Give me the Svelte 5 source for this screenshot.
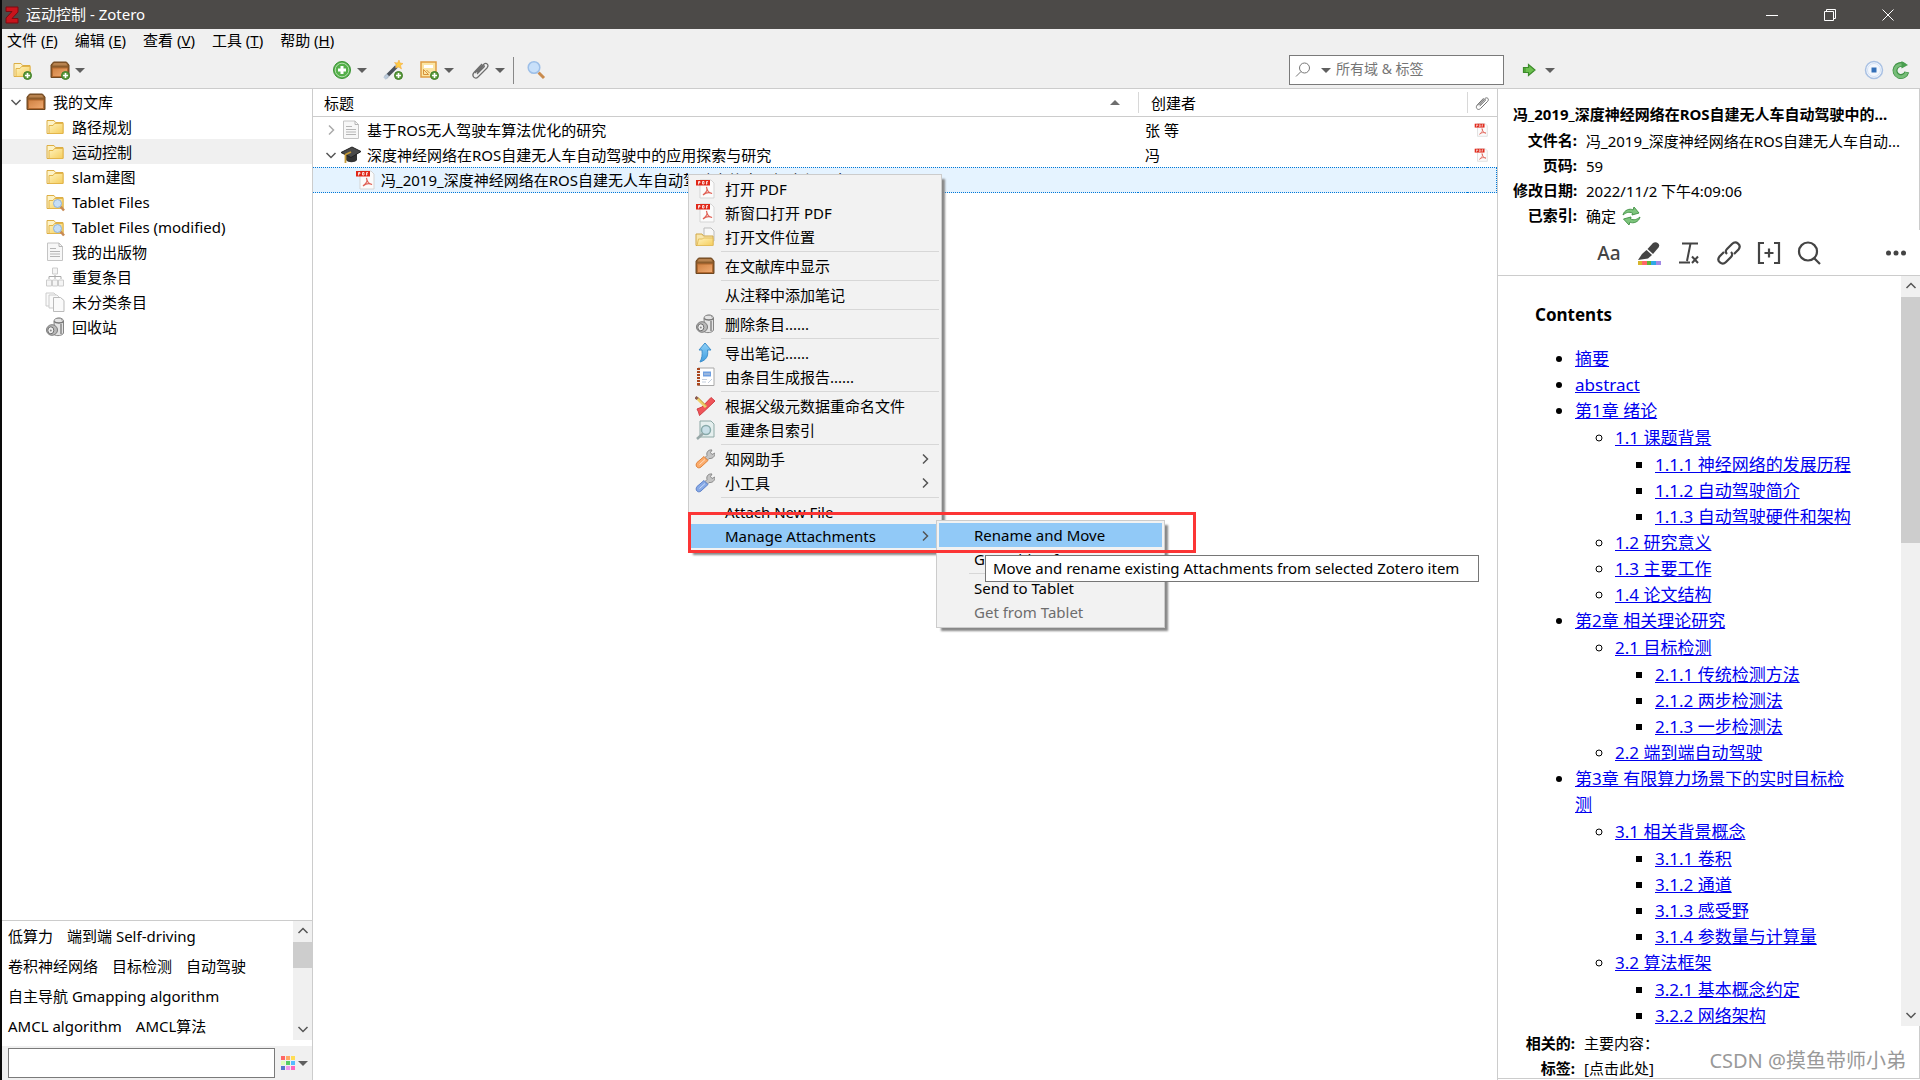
<script lang="ts">
  const menus = [["文件", "F"], ["编辑", "E"], ["查看", "V"], ["工具", "T"], ["帮助", "H"]];

  const collections = [
    {icon: "folder", name: "路径规划"},
    {icon: "folder", name: "运动控制", selected: true},
    {icon: "folder", name: "slam建图"},
    {icon: "savedSearch", name: "Tablet Files"},
    {icon: "savedSearch", name: "Tablet Files (modified)"},
    {icon: "page", name: "我的出版物"},
    {icon: "duplicates", name: "重复条目"},
    {icon: "unfiled", name: "未分类条目"},
    {icon: "trash", name: "回收站"},
  ];

  const tagLines = [["低算力", "端到端 Self-driving"], ["卷积神经网络", "目标检测", "自动驾驶"], ["自主导航 Gmapping algorithm"], ["AMCL algorithm", "AMCL算法"]];

  // each inner array is a group, groups are divided by a separator
  const contextMenu = [
    [{icon: "pdf", label: "打开 PDF"}, {icon: "pdf", label: "新窗口打开 PDF"}, {icon: "openFolder", label: "打开文件位置"}],
    [{icon: "library", label: "在文献库中显示"}],
    [{icon: "", label: "从注释中添加笔记"}],
    [{icon: "trash", label: "删除条目......"}],
    [{icon: "export", label: "导出笔记......"}, {icon: "report", label: "由条目生成报告......"}],
    [{icon: "rename", label: "根据父级元数据重命名文件"}, {icon: "reindex", label: "重建条目索引"}],
    [{icon: "wrenchOrange", label: "知网助手", sub: true}, {icon: "wrenchBlue", label: "小工具", sub: true}],
    [{icon: "", label: "Attach New File"}, {icon: "", label: "Manage Attachments", sub: true, active: true}],
  ];
  const subMenu = [
    [{icon: "", label: "Rename and Move", active: true}, {icon: "", label: "Get Table of Contents"}],
    [{icon: "", label: "Send to Tablet"}, {icon: "", label: "Get from Tablet", disabled: true}],
  ];

  const info = [["文件名:", "冯_2019_深度神经网络在ROS自建无人车自动..."], ["页码:", "59"], ["修改日期:", "2022/11/2 下午4:09:06"], ["已索引:", "确定"]];

  const contents = [
    {text: "摘要"},
    {text: "abstract"},
    {text: "第1章 绪论", items: [
      {text: "1.1 课题背景", items: [{text: "1.1.1 神经网络的发展历程"}, {text: "1.1.2 自动驾驶简介"}, {text: "1.1.3 自动驾驶硬件和架构"}]},
      {text: "1.2 研究意义"},
      {text: "1.3 主要工作"},
      {text: "1.4 论文结构"},
    ]},
    {text: "第2章 相关理论研究", items: [
      {text: "2.1 目标检测", items: [{text: "2.1.1 传统检测方法"}, {text: "2.1.2 两步检测法"}, {text: "2.1.3 一步检测法"}]},
      {text: "2.2 端到端自动驾驶"},
    ]},
    {text: "第3章 有限算力场景下的实时目标检测", items: [
      {text: "3.1 相关背景概念", items: [{text: "3.1.1 卷积"}, {text: "3.1.2 通道"}, {text: "3.1.3 感受野"}, {text: "3.1.4 参数量与计算量"}]},
      {text: "3.2 算法框架", items: [{text: "3.2.1 基本概念约定"}, {text: "3.2.2 网络架构"}]},
    ]},
  ];

  const swatches = ["#f66", "#fa6", "#fd5", "#dfb", "#5c6", "#5bf", "#57c", "#e9e", "#f6b"];
</script>

{#snippet plusBadge()}
  <circle cx="15.5" cy="15.5" r="4" fill="#5a9a3c" stroke="#3f7d28" />
  <path d="M15.5 13v5M13 15.5h5" stroke="#fff" stroke-width="1.6" />
{/snippet}

{#snippet folderShape()}
  <path d="M2 3.500h7l1.500 2H18v11H2z" fill="#fdf3c8" stroke="#dcae45" />
  <path d="M4 8.500h4l1.500-2H18v10H4z" fill="url(#gFolder)" stroke="#e3b54a" />
{/snippet}

{#snippet chestShape()}
  <path d="M3.500 2h13L19 5v12.500H1V5z" fill="#8c5c2c" stroke="#6f4720" />
  <path d="M4 3h12l1.500 2.500h-15z" fill="#b88350" />
  <path d="M2.500 8h15v8.500h-15z" fill="url(#gChest)" stroke="#b46a30" />
{/snippet}

{#snippet wrench(light: string, dark: string)}
  <path d="M10 8.500l2-2c-1-4 2-6 5-5.500L15.500 3.500l1.500 2L20 4c0 4-3 6-6 5.500l-2 2z" fill="#c4c4c4" stroke="#8a8a8a" />
  <path d="M2 13.500l7-6 4 4-7 6.500c-3 2.500-6.500-1-4-4.500z" fill={light} stroke={dark} />
  <path d="M4.500 15.500l5.500-5" stroke="#fff" stroke-opacity=".6" />
{/snippet}

{#snippet icon(name: string)}
  <svg class="icon" viewBox="0 0 20 20" fill="none" aria-hidden="true">
    {#if name === "folder"}
      {@render folderShape()}
    {:else if name === "folderAdd"}
      {@render folderShape()}{@render plusBadge()}
    {:else if name === "savedSearch"}
      {@render folderShape()}
      <path d="M15.500 14.500l3.500 4" stroke="#c78a55" stroke-width="2.500" />
      <circle cx="12.500" cy="11.500" r="4" fill="#c6def5" stroke="#8fb2d9" />
    {:else if name === "library"}
      {@render chestShape()}
    {:else if name === "libraryAdd"}
      {@render chestShape()}{@render plusBadge()}
    {:else if name === "page"}
      <path d="M2.500 1h11.500l3.500 3.500v14h-15z" fill="#f7f7f7" stroke="#c4c4c4" />
      <path d="M14 1v3.500h3.500M5 6.500h6M5 9.500h10M5 12h10M5 14.500h10" stroke="#b5b5b5" />
    {:else if name === "duplicates"}
      <path d="M7.500 1h5v6h-5zM1.500 13h5v6h-5zM7.500 13h5v6h-5zM13.500 13h5v6h-5z" fill="#f5f5f5" stroke="#ccc" />
      <path d="M10 8v4M4 12V9.500h12V12" stroke="#aaa" />
    {:else if name === "unfiled"}
      <path d="M1 1h8l2 2v11H1z" fill="#fafafa" stroke="#ccc" />
      <path d="M4 3h8l2 2v11H4z" fill="#fafafa" stroke="#ccc" />
      <path d="M8.500 5.500h7l3.500 3v11H8.500z" fill="#fafafa" stroke="#bbb" />
    {:else if name === "trash"}
      <path d="M9 4c0-4 9.500-4 9.500 0v12c-1 3-7 3-9 2z" fill="#e4e4e4" stroke="#858585" />
      <path d="M9 4.500c2 2 8 2 9.500 0M16 7v10" stroke="#777" stroke-width="1.300" />
      <path d="M12 1.500c3-1 5 0 5 2" stroke="#999" />
      <ellipse cx="7" cy="13" rx="5.500" ry="5.300" fill="#b8b8b8" stroke="#7c7c7c" />
      <ellipse cx="5.800" cy="13.300" rx="3" ry="3.500" fill="#efefef" stroke="#6d6d6d" />
      <circle cx="5.800" cy="13.500" r="1" fill="#888" />
    {:else if name === "pdf"}
      <path d="M5 1h11l3 3v15H5z" fill="#fbfbfb" stroke="#d5d5d5" />
      <path d="M1 1h14v5.500H1z" fill="#e02718" />
      <path d="M3.500 5.500V2.500h1.500v1.300h-1.500M7.500 2.500v2.500h1.500v-2.500zM11.500 5.500V2.500h1.500M11.500 4h1.200" stroke="#fff" stroke-width=".8" />
      <path d="M11.500 8c1 3 1 4-3.500 8 3-2.500 6-3 9-1.500-3-.5-5-3-5.500-6.500z" stroke="#e06055" stroke-width="1.200" />
    {:else if name === "hat"}
      <path d="M5 9v6c2 3 9 3 11 0V9z" fill="#333" />
      <path d="M0 7.500L11 2l9 4.500-10 6z" fill="#4a4a4a" stroke="#222" />
      <path d="M10 7L4.500 9.500V18" stroke="#c79a35" stroke-width="1.800" />
    {:else if name === "add"}
      <circle cx="10" cy="10" r="8.500" fill="#54b04a" stroke="#3b9434" />
      <circle cx="10" cy="10" r="6.800" stroke="#b5e0ae" />
      <path d="M10 6v8M6 10h8" stroke="#fff" stroke-width="3" />
    {:else if name === "wand"}
      <path d="M2.500 17.500L15 5" stroke="#4b525c" stroke-width="3.500" />
      <path d="M1.500 18.500L5 15M13 7l2.500-2.500" stroke="#bccbdb" stroke-width="3.500" />
      <path d="M16 0l1 3 3 .5-2.500 2L18.500 9l-3-2-3 1 1-3-2-2.500 3 .5z" fill="#fc4" stroke="#f2a53a" stroke-width=".5" />
      {@render plusBadge()}
    {:else if name === "note"}
      <path d="M2 2h15v15H2z" fill="#fbe6a5" stroke="#e09d42" stroke-width="1.500" />
      <path d="M5 5h9v3H5z" fill="#fff" />
      <path d="M4.500 9.500v5h5zM7.500 10l3 3" stroke="#d7913b" />
      {@render plusBadge()}
    {:else if name === "clip"}
      <path d="M5 13L13.500 4.500c3-2.500 6 .5 3.500 3.500L8 17c-3 3-7-1-4-4.500L12 4M7 14l7-7c1-1 0-2-1-1l-6 6.500" stroke="#6e6e6e" stroke-width="1.200" />
    {:else if name === "lookup"}
      <path d="M12.500 12.500l5.500 5.500" stroke="#c98b4e" stroke-width="3" />
      <circle cx="8" cy="7.500" r="5.800" fill="#c8e0fa" stroke="#9dbfe8" stroke-width="1.500" />
    {:else if name === "openFolder"}
      <path d="M9 1h7l3 3v10H9z" fill="#f8f8f8" stroke="#bbb" />
      <path d="M1 7h6l1.500 2H18v9.500H1z" fill="#f8e6ac" stroke="#d1a747" />
      <path d="M3.500 12h4l1-1H18v7.500H2z" fill="url(#gFolder)" stroke="#e3bd5c" />
    {:else if name === "export"}
      <path d="M10 0l6 7h-3.500c1 6-1 10-7.500 12 2-4 2.500-7 2-12H4z" fill="url(#gBlue)" stroke="#3e8fcb" />
    {:else if name === "report"}
      <path d="M3 1h16v17.500H3z" fill="#fff" stroke="#a8a8a8" />
      <path d="M2 1h3v17.500H2z" fill="#a9461d" />
      <path d="M1 3.500h4M1 6.500h4M1 9.500h4M1 12.500h4M1 15.500h4" stroke="#eee" />
      <path d="M8 4.500h8v5H8z" fill="#6f9fe0" />
      <path d="M9 7h6M7 12.500h5M7 15h4M13 16l4-4" stroke="#c5cfdd" />
    {:else if name === "rename"}
      <path d="M2 13l5-2 9-9.500L20 5l-10 9.500-5.500 5-1-3.500z" fill="#f0555a" stroke="#cf3d42" />
      <path d="M2 2l9 9" stroke="#efcf6a" stroke-width="3" />
      <path d="M3 1.500l8.500 8.500" stroke="#b38a3a" stroke-width=".8" />
      <path d="M.5 1l2 2" stroke="#8c5a50" stroke-width="3" />
    {:else if name === "reindex"}
      <path d="M5 1h11l3 3v13H5z" fill="#e5efee" stroke="#8ea9a6" />
      <circle cx="11" cy="10" r="4.500" fill="#c9e0e8" stroke="#8aa" stroke-width="1.500" />
      <path d="M8 13.500L2 19" stroke="#98a8a8" stroke-width="2.500" />
    {:else if name === "wrenchOrange"}
      {@render wrench("#fbac6c", "#e0823a")}
    {:else if name === "wrenchBlue"}
      {@render wrench("#86a9e6", "#5f82c9")}
    {:else if name === "locate"}
      <path d="M3.500 7.500h5v-3l6.500 5.500-6.500 5.500v-3h-5z" fill="#6cc04f" stroke="#3c8c2a" stroke-width="1.200" />
      <path d="M5 8v4.500" stroke="#3c8c2a" />
    {:else if name === "stop"}
      <circle cx="10" cy="10" r="8.500" fill="#f3f7fd" stroke="#a9c1e3" stroke-width="1.500" />
      <circle cx="10" cy="10" r="6.500" stroke="#d5e2f4" />
      <path d="M7.500 7.500h5v5h-5z" fill="#3470b8" />
    {:else if name === "sync"}
      <path d="M15.800 12a6 6 0 1 1-2.500-6.500" stroke="#3f9145" stroke-width="5" />
      <path d="M15.600 12.500a6 6 0 1 1-3-7" stroke="#77bd78" stroke-width="3" />
      <path d="M10.500 1v7.500l6.500-3.500z" fill="#4a9f50" />
    {:else if name === "refresh"}
      <path d="M2 9c1-5 7-7 10-5l1-3 5 6-7 2 .5-2C8 5.500 5 6.500 2 9z" fill="#7dc47c" stroke="#4b984e" />
      <path d="M19 11c-1 5-7 7-10 5l-1 3-5.500-6 7.500-2-.5 2c3.500 1.500 6.500.5 9.500-2z" fill="#7dc47c" stroke="#4b984e" />
    {/if}
  </svg>
{/snippet}

{#snippet chevron(dir: string)}
  <svg class="chevron {dir}" viewBox="0 0 12 12" fill="none" aria-hidden="true">
    <path d="M4 1.500L8.500 6 4 10.500" stroke="currentColor" stroke-width="1.500" />
  </svg>
{/snippet}

{#snippet toolButton(name: string, label: string, menu: boolean)}
  <button class="tool" aria-label={label}>
    {@render icon(name)}
    {#if menu}<span class="caret"></span>{/if}
  </button>
{/snippet}

{#snippet menuGroups(groups: any[])}
  {#each groups as group, i}
    {#if i > 0}<hr />{/if}
    {#each group as item}
      <button class="menuItem" class:active={item.active} disabled={item.disabled} role="menuitem">
        <span class="menuIcon">{#if item.icon}{@render icon(item.icon)}{/if}</span>
        <span class="menuLabel">{item.label}</span>
        {#if item.sub}{@render chevron("right")}{/if}
      </button>
    {/each}
  {/each}
{/snippet}

{#snippet toc(items: any[])}
  <ul>
    {#each items as item}
      <li><a href="#toc">{item.text}</a>{#if item.items}{@render toc(item.items)}{/if}</li>
    {/each}
  </ul>
{/snippet}

<svg class="defs" aria-hidden="true">
  <linearGradient id="gFolder" x2="1" y2="1"><stop stop-color="#fff3bd" /><stop offset="1" stop-color="#f5cd5c" /></linearGradient>
  <linearGradient id="gChest" x2="1" y2="1"><stop stop-color="#cf8142" /><stop offset="1" stop-color="#f0ab72" /></linearGradient>
  <linearGradient id="gBlue" x2="0" y2="1"><stop stop-color="#8ed0f7" /><stop offset="1" stop-color="#3f9de0" /></linearGradient>
</svg>

<div class="window">
  <header class="titleBar">
    <svg class="logo" viewBox="0 0 14 18" aria-hidden="true">
      <path d="M1 1h12v5L7 12.500h6V17H1v-5l6-6.500H1z" fill="#c8141c" stroke="#7c0b10" />
    </svg>
    <h1>运动控制 - Zotero</h1>
    <div class="windowButtons">
      <button aria-label="Minimize"><svg viewBox="0 0 12 12"><path d="M0 6.500h12" /></svg></button>
      <button aria-label="Restore"><svg viewBox="0 0 12 12"><path d="M.5 2.500h9v9h-9zM2.500 2.500V.5h9v9H9.500" /></svg></button>
      <button aria-label="Close"><svg viewBox="0 0 12 12"><path d="M.5.5l11 11M11.500.5l-11 11" /></svg></button>
    </div>
  </header>

  <nav class="menuBar">
    {#each menus as [name, key]}
      <button>{name} (<u>{key}</u>)</button>
    {/each}
  </nav>

  <div class="toolbar">
    <div class="collectionTools">
      {@render toolButton("folderAdd", "新建分类", false)}
      {@render toolButton("libraryAdd", "新建文库", true)}
    </div>
    <div class="itemTools">
      {@render toolButton("add", "新建条目", true)}
      {@render toolButton("wand", "通过标识符添加", false)}
      {@render toolButton("note", "新建笔记", true)}
      {@render toolButton("clip", "添加附件", true)}
      <span class="divider"></span>
      {@render toolButton("lookup", "高级搜索", false)}
    </div>
    <label class="search">
      <svg viewBox="0 0 16 16" fill="none"><circle cx="9.500" cy="6" r="5" stroke="#777" /><path d="M6 9.500L1 14.500" stroke="#777" /></svg>
      <span class="caret"></span>
      <input type="text" placeholder="所有域 & 标签" aria-label="所有域 & 标签" />
    </label>
    <div class="syncTools">
      {@render toolButton("locate", "定位", true)}
      <span class="spacer"></span>
      {@render toolButton("stop", "停止", false)}
      {@render toolButton("sync", "同步", false)}
    </div>
  </div>

  <main>
    <aside class="collections">
      <div class="tree">
        <button class="treeRow root">{@render chevron("down")}{@render icon("library")}<span>我的文库</span></button>
        {#each collections as row}
          <button class="treeRow" class:selected={row.selected}>{@render icon(row.icon)}<span>{row.name}</span></button>
        {/each}
      </div>
      <div class="tags">
        <div class="tagList">
          {#each tagLines as line}
            <div class="tagLine">
              {#each line as tag}<button>{tag}</button>{/each}
            </div>
          {/each}
        </div>
        <div class="scrollbar">{@render chevron("up")}<span class="thumb tagThumb"></span>{@render chevron("down")}</div>
      </div>
      <div class="tagFilter">
        <input type="text" aria-label="筛选标签" />
        <button class="tool" aria-label="标签颜色">
          <span class="swatches">{#each swatches as colour}<i style="background: {colour}"></i>{/each}</span>
          <span class="caret"></span>
        </button>
      </div>
    </aside>

    <section class="items">
      <table>
        <colgroup><col /><col class="creatorCol" /><col class="clipCol" /></colgroup>
        <thead>
          <tr>
            <th><span class="thTitle">标题<span class="sortMark"></span></span></th>
            <th><span class="thCell">创建者</span></th>
            <th><span class="thCell clip">{@render icon("clip")}</span></th>
          </tr>
        </thead>
        <tbody>
          <tr>
            <td><div class="itemTitle faint">{@render chevron("right")}{@render icon("page")}<span>基于ROS无人驾驶车算法优化的研究</span></div></td>
            <td class="creator">张 等</td>
            <td class="attachment">{@render icon("pdf")}</td>
          </tr>
          <tr>
            <td><div class="itemTitle">{@render chevron("down")}{@render icon("hat")}<span>深度神经网络在ROS自建无人车自动驾驶中的应用探索与研究</span></div></td>
            <td class="creator">冯</td>
            <td class="attachment">{@render icon("pdf")}</td>
          </tr>
          <tr class="selected">
            <td><div class="itemTitle child">{@render icon("pdf")}<span>冯_2019_深度神经网络在ROS自建无人车自动驾驶中的应用探索与研究.pdf</span></div></td>
            <td></td>
            <td></td>
          </tr>
        </tbody>
      </table>
    </section>

    <aside class="details">
      <div class="info">
        <h2>冯_2019_深度神经网络在ROS自建无人车自动驾驶中的...</h2>
        <dl>
          {#each info as [label, value], i}
            <dt>{label}</dt>
            <dd>{value}{#if i === 3}{@render icon("refresh")}{/if}</dd>
          {/each}
        </dl>
      </div>
      <div class="noteTools">
        <button class="format" aria-label="Format text">Aa</button>
        <button aria-label="Highlight">
          <svg viewBox="0 0 24 24">
            <path d="M10.500 8l5.500-6c3-2.500 8 1 5.500 4.500L16 13z" fill="#444" /><path d="M9.500 9l5.500 5-4 3.500L1 19l4-6z" fill="#444" />
            <path d="M1 20h5v4H1z" fill="#d6b52c" /><path d="M5 20h5v4H5z" fill="#ff6666" /><path d="M10 20h5v4h-5z" fill="#5fb236" /><path d="M14 20h5v4h-5z" fill="#2ea8e5" /><path d="M19 20h5v4h-5z" fill="#a28ae5" />
          </svg>
        </button>
        <button aria-label="Clear formatting">
          <svg viewBox="0 0 24 24" fill="none" stroke="#444" stroke-width="2"><path d="M6 3.500V2.500h14v1M13.500 2.500L10 20M2 21.500h11M15 15.500l6 6.500M21 15.500l-6 6.500" /></svg>
        </button>
        <button aria-label="Insert link">
          <svg viewBox="0 0 24 24" fill="none" stroke="#444" stroke-width="2.200"><path d="M10 13c-2-2-1-4 0-5l5-5c4-4 10 1 6.500 5.500L17 13M14 11c2 2 1 4 0 5l-5 5c-4 4-10-1-6.500-5.500L7 11" /></svg>
        </button>
        <button aria-label="Insert citation">
          <svg viewBox="0 0 24 24" fill="none" stroke="#444" stroke-width="2.200"><path d="M7 2H2v20h5M17 2h5v20h-5M12 7.500v9M7.500 12h9" /></svg>
        </button>
        <button aria-label="Find">
          <svg viewBox="0 0 24 24" fill="none" stroke="#444" stroke-width="2.200"><circle cx="11" cy="10.500" r="9" /><path d="M17 17l6 6" /></svg>
        </button>
        <span class="spacer"></span>
        <button aria-label="More">
          <svg viewBox="0 0 24 24" fill="#444"><circle cx="4.500" cy="12" r="2.500" /><circle cx="12" cy="12" r="2.500" /><circle cx="19.500" cy="12" r="2.500" /></svg>
        </button>
      </div>
      <div class="note">
        <article>
          <h3>Contents</h3>
          {@render toc(contents)}
        </article>
        <div class="scrollbar">{@render chevron("up")}<span class="thumb noteThumb"></span>{@render chevron("down")}</div>
      </div>
      <dl class="related">
        <dt>相关的:</dt><dd>主要内容：</dd>
        <dt>标签:</dt><dd>[点击此处]</dd>
      </dl>
    </aside>
  </main>

  <div class="popup contextMenu" role="menu">{@render menuGroups(contextMenu)}</div>
  <div class="popup subMenu" role="menu">{@render menuGroups(subMenu)}</div>
  <div class="marker"></div>
  <div class="tooltip" role="tooltip">Move and rename existing Attachments from selected Zotero item</div>
  <div class="watermark">CSDN @摸鱼带师小弟</div>
</div>

<style>
  :global(body) {
    margin: 0;
    background: #0a0a0a;
  }
  .window {
    position: relative;
    box-sizing: border-box;
    height: 100vh;
    padding-left: 2px;
    display: flex;
    flex-direction: column;
    overflow: hidden;
    font: 15px/24px "Noto Sans", "Noto Sans CJK SC", sans-serif;
    color: #000;
  }
  button, input {
    font: inherit;
    color: inherit;
    background: none;
    border: 0;
    padding: 0;
    margin: 0;
  }
  h1, h2, h3, dl, dd, ul {margin: 0; font-size: inherit}
  .defs {position: absolute; width: 0; height: 0}
  .icon {width: 20px; height: 20px; flex: none; display: block}
  .chevron {width: 12px; height: 12px; flex: none; color: #555}
  .chevron.down {transform: rotate(90deg)}
  .chevron.up {transform: rotate(-90deg)}
  .spacer {flex: 1}
  .caret {
    border: 5px solid transparent;
    border-top-color: #5f5f5f;
    border-bottom: 0;
  }

  .titleBar {
    height: 29px;
    display: flex;
    align-items: center;
    background: #4c4a48;
    color: #fff;
    flex: none;
  }
  .titleBar h1 {flex: 1; font-weight: normal; line-height: 22px; padding-bottom: 2px}
  .logo {width: 14px; height: 18px; margin: 0 7px 0 3px}
  .windowButtons {display: flex; padding-right: 3px}
  .windowButtons button {width: 58px; height: 29px}
  .windowButtons svg {width: 12px; height: 12px; stroke: #fff; fill: none}

  .menuBar {
    height: 23px;
    flex: none;
    display: flex;
    align-items: flex-start;
    gap: 17px;
    padding-left: 5px;
    line-height: 22px;
    background: #f0f0f0;
  }

  .toolbar {
    height: 36px;
    flex: none;
    display: flex;
    align-items: center;
    background: #f0f0f0;
    border-bottom: 1px solid #ccc;
  }
  .tool {display: flex; align-items: center; gap: 5px}
  .collectionTools {width: 301px; padding-left: 10px; display: flex; gap: 18px}
  .itemTools {flex: 1; padding-left: 19px; display: flex; align-items: center; gap: 16px}
  .divider {width: 1px; height: 27px; background: #888; margin: 0 -4px 0 -8px}
  .search {
    box-sizing: border-box;
    width: 215px;
    height: 30px;
    display: flex;
    align-items: center;
    border: 1px solid #7a7a7a;
    background: #fff;
    padding: 0 5px;
  }
  .search svg {width: 16px; height: 16px; margin-right: 10px}
  .search input {flex: 1; min-width: 0; margin-left: 5px; padding-bottom: 3px; font-size: 14px; outline: none}
  .search input::placeholder {color: #757575; opacity: 1}
  .syncTools {width: 391px; padding: 0 9px 0 16px; display: flex; gap: 7px}

  main {flex: 1; min-height: 0; display: flex; background: #fff}

  .collections {
    width: 310px;
    flex: none;
    display: flex;
    flex-direction: column;
    border-right: 1px solid #ccc;
  }
  .tree {flex: 1; min-height: 0}
  .treeRow {
    width: 100%;
    height: 25px;
    display: flex;
    align-items: center;
    gap: 7px;
    padding-left: 43px;
  }
  .treeRow.root {padding-left: 8px; gap: 4px}
  .treeRow.root span {margin-left: 3px}
  .treeRow.selected {background: #f0f0f0}
  .tags {height: 125px; display: flex; border-top: 1px solid #ccc}
  .tagList {flex: 1; padding-left: 6px}
  .tagLine {height: 30px; display: flex; align-items: center; gap: 14px}
  .tags .scrollbar {height: 119px}
  .scrollbar {
    width: 19px;
    flex: none;
    display: flex;
    flex-direction: column;
    align-items: center;
    justify-content: space-between;
    padding: 4px 0 5px;
    box-sizing: border-box;
    background: #f0f0f0;
  }
  .thumb {width: 19px; background: #cdcdcd}
  .tagThumb {height: 26px; margin: 5px 0 auto}
  .noteThumb {height: 246px; margin: 5px 0 auto}
  .tagFilter {
    height: 34px;
    display: flex;
    align-items: center;
    gap: 6px;
    padding-left: 6px;
    background: #f0f0f0;
  }
  .tagFilter input {
    box-sizing: border-box;
    width: 267px;
    height: 30px;
    background: #fff;
    border: 1px solid #7a7a7a;
  }
  .tagFilter .tool {gap: 3px}
  .swatches {display: grid; grid-template-columns: repeat(3, 4px); gap: 1px}
  .swatches i {height: 4px}

  .items {flex: 1; min-width: 0}
  table {width: 100%; table-layout: fixed; border-collapse: separate; border-spacing: 0}
  th, td {padding: 0; text-align: left; font-weight: normal}
  .creatorCol {width: 329px}
  .clipCol {width: 30px}
  th {height: 27px; border-bottom: 1px solid #ccc}
  .thTitle {display: flex; justify-content: space-between; align-items: center; padding: 0 18px 0 11px}
  .sortMark {border: 5px solid transparent; border-bottom-color: #6e6e6e; border-top: 0}
  .thCell {display: block; height: 21px; line-height: 22px; border-left: 1px solid #d8d8d8; padding-left: 12px}
  .thCell.clip {padding: 3px 0 0 6px; height: 18px}
  .thCell .icon {width: 16px; height: 16px}
  .itemTitle {display: flex; align-items: center; gap: 4px; height: 25px; padding-left: 12px; white-space: nowrap; overflow: hidden}
  .itemTitle span {margin-left: 2px}
  .itemTitle.faint .chevron {color: #aaa}
  .itemTitle.child {height: 24px; line-height: 22px; padding-left: 42px}
  .creator {padding-left: 7px}
  .attachment .icon {width: 14px; height: 14px; margin-left: 7px}
  tr.selected td {background: #e5f3ff; border: 1px dotted #0078d7; border-width: 1px 0}
  tr.selected td:last-child {border-right-width: 1px}

  .details {width: 422px; flex: none; display: flex; flex-direction: column; border-left: 1px solid #ccc}
  .info {
    height: 130px;
    padding: 11px 0 0 15px;
    border-right: 1px solid #ccc;
    white-space: nowrap;
  }
  h2 {line-height: 28px; font-weight: bold}
  dl {display: grid; grid-template-columns: 64px 1fr; column-gap: 9px; line-height: 25px}
  .info dl {line-height: 24px; grid-auto-rows: 25px}
  dt {font-weight: bold; text-align: right; white-space: nowrap}
  dd {display: flex; align-items: center; gap: 5px}
  .noteTools {
    height: 45px;
    display: flex;
    align-items: center;
    gap: 16px;
    padding: 0 12px 0 99px;
    border-bottom: 1px solid #ccc;
    color: #444;
  }
  .noteTools button {width: 24px; height: 24px}
  .noteTools svg {width: 24px; height: 24px; display: block}
  .noteTools .format {font-size: 19px; line-height: 24px; font-weight: 500}
  .note {flex: 1; min-height: 0; display: flex}
  article {
    flex: 1;
    overflow: hidden;
    padding: 26px 42px 0 37px;
    font-size: 17px;
    line-height: 26px;
  }
  h3 {font-weight: bold; margin-bottom: 18px}
  ul {padding-left: 40px}
  ul ul {margin-top: 1px}
  a {color: #00e}
  .related {
    height: 53px;
    border-right: 1px solid #ccc;
    border-bottom: 1px solid #ccc;
    margin-bottom: 1px;
    padding: 5px 0 0 13px;
    box-sizing: border-box;
  }

  .popup {
    position: absolute;
    box-sizing: border-box;
    background: #f2f2f2;
    border: 1px solid #ccc;
    padding: 2px 2px 3px;
    box-shadow: 4px 4px 2px -1px #888;
  }
  .contextMenu {left: 688px; top: 174px; width: 254px}
  .subMenu {left: 936px; top: 520px; width: 229px}
  .menuItem {width: 100%; height: 24px; display: flex; align-items: center; padding: 0 8px 0 4px}
  .menuItem.active {background: #91c9f7}
  .menuItem:disabled {color: #6d6d6d}
  .menuIcon {width: 30px; flex: none}
  .menuLabel {flex: 1; text-align: left; white-space: nowrap}
  hr {margin: 2px 0 2px 30px; border: 0; border-top: 1px solid #d7d7d7}
  .subMenu .menuIcon {width: 31px}
  .marker {
    position: absolute;
    left: 688px;
    top: 512px;
    width: 508px;
    height: 41px;
    box-sizing: border-box;
    border: 3px solid #fc3535;
  }
  .tooltip {
    position: absolute;
    left: 985px;
    top: 555px;
    width: 478px;
    padding: 0 7px 1px;
    background: #fff;
    border: 1px solid #767676;
    white-space: nowrap;
  }
  .watermark {
    position: absolute;
    right: 14px;
    bottom: 4px;
    font-size: 20px;
    line-height: 30px;
    color: #999;
  }
</style>
